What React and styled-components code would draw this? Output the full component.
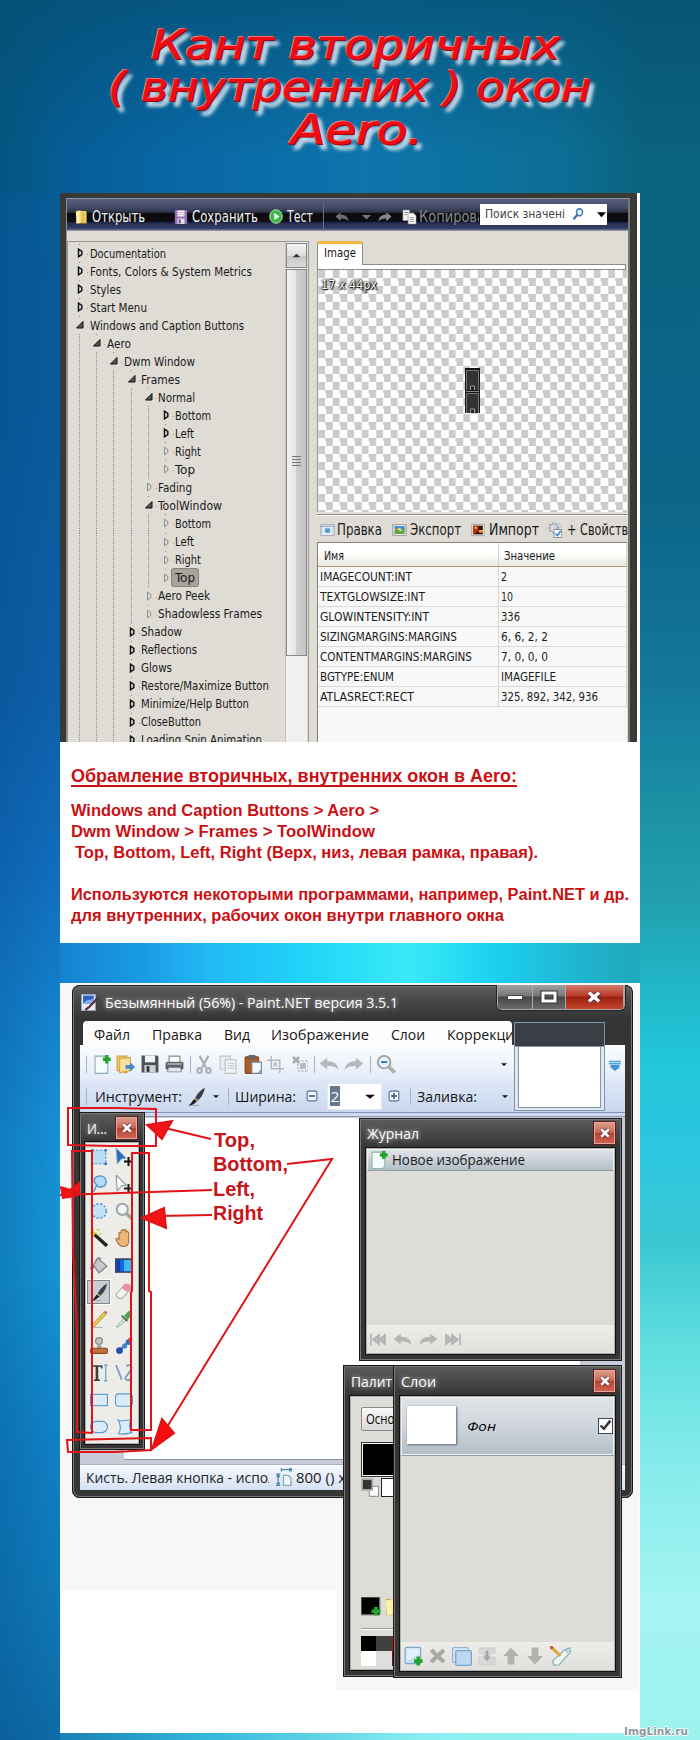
import React, { useLayoutEffect, useRef, useState } from "react";
import styled, { createGlobalStyle, css } from "styled-components";

const Global = createGlobalStyle`
  * { box-sizing: border-box; }
  body { margin: 0; }
  svg { display: block; flex: none; }
`;

const tahoma = `"DejaVu Sans Condensed", "DejaVu Sans", Tahoma, sans-serif`;
const segoe = `"Open Sans", "Noto Sans", "Segoe UI", sans-serif`;
const arial = `"Liberation Sans", Arial, sans-serif`;

/* ---------- text set to a known width ---------- */
const FitBox = styled.span`
  display: inline-block;
  flex: none;
  white-space: pre;
  text-align: left;
  width: ${(p) => p.$w}px;
  margin-left: ${(p) => p.$gap || 0}px;
`;
const FitInner = styled.span`
  display: inline-block;
  transform-origin: 0 50%;
`;
function Fit({ w, gap, children }) {
  const ref = useRef(null);
  const [k, setK] = useState(1);
  useLayoutEffect(() => {
    setK(w / ref.current.getBoundingClientRect().width);
  }, [w]);
  return (
    <FitBox $w={w} $gap={gap}>
      <FitInner ref={ref} style={{ transform: `scaleX(${k})` }}>{children}</FitInner>
    </FitBox>
  );
}

/* ---------- page ---------- */
const Page = styled.main`
  position: relative;
  width: 700px;
  height: 1740px;
  overflow: hidden;
  display: flex;
  flex-direction: column;
  background:
    linear-gradient(90deg, #1682d0 0, #1a9ae4 14%, #22baf5 26%, #20d4f8 42%, #38eaf8 60%, #1cd0f0 75%, #1fb4d0 90%, #20a8bc 100%) 60px 930px / 580px 60px no-repeat,
    linear-gradient(180deg, #0b627c 0, #0c6488 12%, #0c6688 20%, #13789c 32%, #1a8fa4 39%, #22a0b0 46%, #20b2c2 50%, #22c6da 56%, #2cc6e0 62%, #3cc8d2 68%, #62dfe0 75%, #88ecec 83%, #a4f4f2 91%, #9df2ee 100%) 640px 193px / 60px 1547px no-repeat,
    linear-gradient(90deg, rgba(0, 70, 130, .28), transparent) 0 193px / 60px 1547px no-repeat,
    linear-gradient(180deg, #075c96 0, #0a5a9c 14%, #0e5fa8 32%, #116cbc 43%, #1480cc 52%, #1790d6 61%, #1494d2 70%, #1080c4 81%, #0f78b6 91%, #0e6aa6 100%) 0 193px / 60px 1547px no-repeat,
    linear-gradient(180deg, rgba(5, 80, 115, .75), rgba(5, 80, 115, 0) 80%) 0 0 / 100% 193px no-repeat,
    linear-gradient(90deg, #04567f 0, #065c96 9%, #0867a4 25%, #0d74ac 52%, #0c6f96 80%, #0b627c 92%, #0b627c 100%) 0 0 / 100% 193px no-repeat,
    linear-gradient(90deg, #0e6aa6 0, #35b8dc 30%, #8aeef0 60%, #9df2ee 100%);
`;
const Heading = styled.h1`
  margin: 0;
  height: 193px;
  padding: 23.5px 0 0 108px;
  display: flex;
  flex-direction: column;
  font: italic 400 40px/42.5px "DejaVu Sans", sans-serif;
  color: #ee0c14;
  -webkit-text-stroke: 0.5px #ee0c14;
  text-shadow: -1px -1px 0 #ff8f8c, 1px 1px 0 #82000a, 4px 5px 4px #c5dce8, 4px 5px 3px #a9cbdc;
`;
const Card = styled.section`
  width: 580px;
  height: ${(p) => p.$h}px;
  margin: 0 0 ${(p) => p.$mb || 0}px 60px;
  flex: none;
  background: #fff;
  position: relative;
`;

/* ---------- style editor ---------- */
const Editor = styled.div`
  width: 577px;
  height: 549px;
  overflow: hidden;
  display: flex;
  flex-direction: column;
  border: solid #393936;
  border-width: 5px 7px 0 6px;
  background: #dfdcd6;
  box-shadow: inset 1px 1px 0 #8b8f9c, inset -2px 0 0 #77756f;
  font-family: ${tahoma};
  color: #1a1a1a;
`;
const EditorBar = styled.div`
  flex: none;
  height: 32px;
  margin: 1px 2px 0 1px;
  display: flex;
  align-items: center;
  padding: 3px 0 0 8px;
  background: linear-gradient(#575f80 0, #454c68 25%, #2c3145 42%, #0c0c10 43%, #0d0d14 70%, #232a4c 74%, #38426e 94%, #8f93a0 97%);
  color: #f4f4f6;
  font-size: 15px;
  line-height: 20px;
`;
const Slot = styled.span`
  flex: none;
  display: inline-flex;
  align-items: center;
  margin-left: ${(p) => p.$gap || 0}px;
  color: ${(p) => p.$c || "inherit"};
`;
const BarRule = styled.i`
  flex: none;
  width: 1px;
  height: ${(p) => p.$h || 28}px;
  margin-left: ${(p) => p.$gap}px;
  background: ${(p) => p.$c || "#6a6f80"};
`;
const Search = styled.div`
  flex: none;
  display: flex;
  align-items: center;
  width: 127px;
  height: 21px;
  margin: -5px 0 0 1px;
  padding-left: 5px;
  background: #fff;
  color: #444;
  font-size: 13px;
`;
const Clip = styled.div`
  overflow: hidden;
  flex: none;
  width: ${(p) => p.$w}px;
`;
const EditorBody = styled.div`
  flex: 1;
  display: flex;
  padding: 10px 1px 0 1px;
`;
const Tree = styled.div`
  width: 242px;
  flex: none;
  display: flex;
  border: 1px solid #9a9890;
  border-bottom: 0;
`;
const TreeRows = styled.ul`
  flex: 1;
  margin: 0;
  padding: 2px 0 0 11px;
  list-style: none;
  overflow: hidden;
  height: 501px;
`;
const TreeRow = styled.li`
  display: flex;
  align-items: center;
  height: 18.04px;
  font-size: 12.5px;
  line-height: 17px;
`;
const Guide = styled.i`
  flex: none;
  width: 17.2px;
  align-self: stretch;
  background: repeating-linear-gradient(#8a8882 0 1px, transparent 1px 2px) 0 0 / 1px 100% no-repeat;
`;
const Toggle = styled.span`
  flex: none;
  width: 10.5px;
  align-self: stretch;
  display: flex;
  align-items: center;
  background: linear-gradient(#888 0 0) 0 0 / 1px 1px no-repeat, linear-gradient(#999 0 0) 8px 10px / 1px 1px no-repeat;
  svg { margin-left: -3px; }
`;
const TreeLabel = styled.span`
  display: inline-flex;
  ${(p) => p.$on && css`
    margin-left: -3px;
    padding: 0 3px;
    background: #aaa49d;
    border-radius: 2px;
    box-shadow: 0 0 0 1px #89837c;
  `}
`;
const Scroll = styled.div`
  width: 22px;
  flex: none;
  margin-right: 1px;
  background: #f1f0ee;
  border-left: 1px solid #c4c2bd;
`;
const ScrollUp = styled.div`
  margin-top: 1px;
  height: 25px;
  border: 1px solid #85888c;
  background: linear-gradient(#f4f4f4, #dcdcdc 50%, #c6c6c6 52%, #dadada);
  display: flex;
  align-items: center;
  justify-content: center;
`;
const ScrollThumb = styled.div`
  margin-top: 1px;
  height: 387px;
  padding-bottom: 3px;
  border: 1px solid #85888c;
  background: linear-gradient(90deg, #f4f4f4, #e4e4e6 45%, #cfcfd2 50%, #c3c3c8);
  display: flex;
  align-items: center;
  justify-content: center;
`;
const Side = styled.div`
  flex: none;
  width: 311px;
  margin-left: 8px;
  display: flex;
  flex-direction: column;
`;
const Tab = styled.div`
  width: 46px;
  height: 23px;
  flex: none;
  padding-left: 6px;
  border: 1px solid #8d8b86;
  border-top: 3px solid #f2b545;
  border-bottom: 0;
  border-radius: 3px 3px 0 0;
  background: #fff;
  font-size: 12.5px;
  line-height: 18px;
`;
const TabStrip = styled.div`
  height: 6px;
  width: 309px;
  flex: none;
  background: #fff;
  border: 1px solid #8d8b86;
  position: relative;
  &::before { content: ""; position: absolute; left: 0; top: -1px; width: 44px; height: 1px; background: #fff; }
`;
const Checker = styled.div`
  flex: none;
  height: 242px;
  width: 310px;
  display: grid;
  grid-template-rows: 98px 1fr;
  justify-items: center;
  border-left: 1px solid #999;
  background: repeating-conic-gradient(#fff 0 25%, #cbcbcb 0 50%) 0.3px 0 / 14.5px 16px;
`;
const Dimension = styled.span`
  justify-self: start;
  padding: 6px 0 0 3px;
  font-size: 12.5px;
  line-height: 17px;
  color: #fff;
  text-shadow: 0 0 1px #000, 1px 1px 1px #000, -1px 0 2px #333, 1px 0 2px #555;
`;
const Actions = styled.div`
  flex: none;
  height: 28px;
  display: flex;
  align-items: center;
  margin-top: 2px;
  padding: 3px 0 0 3px;
  overflow: hidden;
  border-top: 1px solid #8f8d88;
  box-shadow: inset 0 1px 0 #fff;
  font-size: 15px;
  line-height: 20px;
`;
const Table = styled.div`
  flex: 1;
  width: 310px;
  background: #f8f8f8;
  border: 1px solid #85827c;
  border-width: 1px 0 0 1px;
  font-size: 12.3px;
`;
const Row = styled.div`
  display: grid;
  grid-template-columns: 181px 1fr;
  height: ${(p) => (p.$head ? 24 : 20)}px;
  line-height: ${(p) => (p.$head ? 26 : 21)}px;
  border-bottom: 1px solid ${(p) => (p.$head ? "#b59a80" : "#dadad6")};
  background: ${(p) => (p.$head ? "linear-gradient(#fff 45%, #ece8dc)" : "none")};
  overflow: hidden;
`;
const Cell = styled.div`
  padding-left: ${(p) => p.$pl}px;
  border-right: 1px solid #d6d4cd;
`;

/* ---------- caption under the editor ---------- */
const Note = styled.div`
  padding: 21px 0 0 11px;
  display: flex;
  flex-direction: column;
  align-items: flex-start;
  font: 700 17.2px/21.1px ${arial};
  color: #cb1014;
`;
const NoteTitle = styled.h2`
  margin: 0 0 12.6px;
  height: 24px;
  border-bottom: 2px solid #cb1014;
  font: 700 18.6px/26px ${arial};
`;
const NoteLine = styled.p`
  margin: 0 0 ${(p) => p.$mb || 0}px ${(p) => p.$ml || 0}px;
  height: 21.1px;
`;

/* ---------- floating windows ---------- */
const Win = styled.div`
  position: absolute;
  left: ${(p) => p.$x}px;
  top: ${(p) => p.$y}px;
  width: ${(p) => p.$w}px;
  height: ${(p) => p.$h}px;
  display: flex;
  flex-direction: column;
  overflow: hidden;
  font-family: ${segoe};
  padding: 0 ${(p) => p.$pad || 8}px ${(p) => p.$pad || 8}px;
  border-radius: ${(p) => p.$r || 0}px;
  background: linear-gradient(#5e5e5e, #474747 16px, #353535 ${(p) => p.$cap || 30}px, #363636);
  box-shadow: inset 0 0 0 1px #191919, inset 0 0 0 2px #777;
`;
const WinTitle = styled.div`
  flex: none;
  height: ${(p) => p.$h}px;
  display: flex;
  align-items: center;
  padding: 0 0 ${(p) => p.$pb || 0}px ${(p) => p.$pl || 0}px;
  color: #fff;
  font-size: ${(p) => p.$fs || 15}px;
  line-height: 20px;
  text-shadow: 0 0 5px #aaa, 0 0 9px #888;
`;
const WinBody = styled.div`
  flex: 1;
  display: flex;
  flex-direction: column;
  position: relative;
  overflow: hidden;
  background: #dedcd6;
  outline: 1px solid #b0b0b0;
  box-shadow: 0 0 0 2px #111;
`;
const CloseX = styled.span`
  flex: none;
  width: 21px;
  height: 22px;
  margin-left: ${(p) => p.$gap}px;
  display: flex;
  align-items: center;
  justify-content: center;
  border: 1px solid #e6a79d;
  box-shadow: 0 0 0 1px #5a211c;
  background: linear-gradient(#dd9a8c, #c96655 48%, #b5412f 50%, #cf6350);
`;
const CaptionButtons = styled.div`
  align-self: flex-start;
  display: flex;
  width: 130px;
  height: 25px;
  margin-left: 99px;
  border: 1px solid #a8a8a8;
  border-top: 0;
  border-radius: 0 0 5px 5px;
  box-shadow: 0 0 0 1px #222;
  overflow: hidden;
`;
const CaptionButton = styled.span`
  width: ${(p) => p.$w}px;
  display: flex;
  align-items: center;
  justify-content: center;
  border-right: 1px solid #a8a8a8;
  background: ${(p) => p.$red ? "linear-gradient(#d2796b, #b93c2a 45%, #98200f 50%, #c8452c)" : "linear-gradient(#a0a0a0, #787878 45%, #474747 50%, #6a6a6a)"};
`;
const MenuBar = styled.div`
  flex: none;
  display: flex;
  align-items: center;
  height: 24px;
  width: 429px;
  margin-left: 3px;
  padding: 1px 0 0 11px;
  background: #fdfdfe;
  border-radius: 4px 4px 0 0;
  overflow: hidden;
  font-size: 15px;
  line-height: 20px;
  color: #151515;
`;
const Tools = styled.div`
  flex: none;
  height: ${(p) => p.$h}px;
  display: flex;
  align-items: center;
  padding: ${(p) => p.$pt || 0}px 0 0 6px;
  background: ${(p) => p.$bg};
  font-size: 15px;
  line-height: 20px;
  color: #151515;
`;
const WidthInput = styled.div`
  flex: none;
  width: 55px;
  height: 27px;
  margin-left: 9px;
  display: flex;
  align-items: center;
  padding-left: 2px;
  background: #fff;
  border: 1px solid #e4eaf4;
  color: #fff;
`;
const Selected = styled.span`
  width: 10px;
  line-height: 20px;
  text-align: center;
  background: #667a8c;
`;
const Workspace = styled.div`
  flex: 1;
  padding: 6px 0 4px 0;
  background: linear-gradient(#8094b8 0 1px, #cfdaee 1px 4px, #8898b0 4px 5px, #c8ccd9 5px);
`;
const Canvas = styled.div`
  height: 100%;
  width: 500px;
  background:
    linear-gradient(#8b8f98 0 0) 44px 100% / 456px 1px no-repeat,
    linear-gradient(#fff 0 0) 44px 0 / 456px 100% no-repeat,
    linear-gradient(#fff 0 0) 0 0 / 100% calc(100% - 11px) no-repeat;
`;
const Status = styled.div`
  flex: none;
  height: 26px;
  display: flex;
  align-items: center;
  padding: 0 0 1px 6px;
  background: linear-gradient(#f6f9fe, #d5e1f4);
  border-top: 1px solid #a9b3c4;
  font-size: 15px;
  line-height: 20px;
  color: #222;
`;
const Preview = styled.div`
  position: absolute;
  left: 442px;
  top: 37px;
  width: 91px;
  height: 89px;
  padding: 0 3px 2px;
  border: 1px solid #8295a4;
  background: #dfe8f2;
  display: flex;
  flex-direction: column;
  &::before { content: ""; height: 23px; margin: 0 -3px; background: #3b3f45; border-bottom: 1px solid #8295a4; }
  &::after { content: ""; flex: 1; background: #fff; border: 1px solid #8295a4; border-top: 0; }
`;
const Overflow = styled.div`
  position: absolute;
  left: 537px;
  top: 75px;
`;
const Ground = styled.div`
  height: ${(p) => p.$h}px;
  width: ${(p) => p.$w}px;
  margin-left: ${(p) => p.$ml || 0}px;
  background: #f8f8f8;
`;

const ToolGrid = styled.div`
  flex: 1;
  display: grid;
  grid-template-columns: 25px 25px;
  grid-auto-rows: 27px;
  place-items: center;
  background: #eeece8;
`;
const ToolCell = styled.span`
  width: 23px;
  height: 24px;
  display: flex;
  align-items: center;
  justify-content: center;
  ${(p) => p.$on && css`border: 1px solid #7d8890; background: #c9ced3; box-shadow: 0 0 0 1px #fff;`}
`;
const HistoryItem = styled.div`
  flex: none;
  height: 22px;
  display: flex;
  align-items: center;
  padding-left: 3px;
  border: 1px solid #eef2f4;
  border-bottom-color: #8aa0a8;
  background: linear-gradient(#dfe4e9, #b4bec7);
  font-size: 14.5px;
  line-height: 20px;
  color: #1c1c1c;
`;
const Spacer = styled.div`flex: 1;`;
const FootBar = styled.div`
  flex: none;
  height: 28px;
  display: flex;
  align-items: center;
  padding-left: ${(p) => p.$pl}px;
  gap: ${(p) => p.$g}px;
  background: linear-gradient(#eeedea, #e2e0dc);
`;
const LayerItem = styled.div`
  flex: none;
  height: 58px;
  display: flex;
  align-items: center;
  padding-left: 5px;
  border: 1px solid #eef2f4;
  box-shadow: 0 1px 0 #8e9ba4;
  background: linear-gradient(#dfe4e8, #d0d6dc 50%, #b3bfc8);
  font-size: 13.5px;
  font-style: italic;
`;
const Thumb = styled.i`
  width: 51px;
  height: 38px;
  margin-top: -3px;
  background: #fff;
  box-shadow: 1px 1px 2px #667, 0 0 1px #889;
`;
const Check = styled.i`
  width: 16px;
  height: 16px;
  margin-left: 102px;
  border: 1px solid #444;
  background: #fff;
`;
const PaletteBody = styled.div`
  padding: 10px 0 0 10px;
  display: flex;
  flex-direction: column;
`;
const Combo = styled.div`
  height: 24px;
  width: 70px;
  padding-left: 4px;
  border: 1px solid #8a8a88;
  border-radius: 2px;
  background: linear-gradient(#fafafa, #d8d8d8);
  font-size: 14px;
  line-height: 22px;
`;
const Primary = styled.div`
  margin-top: 11px;
  width: 60px;
  height: 35px;
  background: #000;
  border: 1px solid #333;
  box-shadow: inset 0 0 0 1px #fff;
`;
const SwatchRow = styled.div`
  display: flex;
  margin-top: ${(p) => p.$mt || 0}px;
`;
const Swatch = styled.i`
  width: ${(p) => p.$w || 15.3}px;
  height: ${(p) => p.$h || 15}px;
  background: ${(p) => p.$c};
  ${(p) => p.$line && css`border: 1px solid #222;`}
  margin-left: ${(p) => p.$gap || 0}px;
`;
const Divider = styled.div`
  margin-top: 11px;
  height: 2px;
  background: linear-gradient(#9a9894 50%, #fff 50%);
`;

/* ---------- hand annotations ---------- */
const Marks = styled.svg`
  position: absolute;
  left: 0;
  top: 983px;
`;
const Labels = styled.div`
  position: absolute;
  left: 213px;
  top: 1128px;
  display: flex;
  flex-direction: column;
  font: 700 20px/24.4px ${arial};
  color: #c8141a;
`;
const Watermark = styled.div`
  position: absolute;
  left: 624px;
  top: 1725px;
  font: 700 11px/14px "DejaVu Sans", sans-serif;
  color: #8d9a9c;
  text-shadow: 1px 0 #fff, -1px 0 #fff, 0 1px #fff, 0 -1px #fff;
`;

/* ---------- icons ---------- */
const plus = (x, y) => <path d={`M${x} ${y - 3.6}v7.2M${x - 3.6} ${y}h7.2`} stroke="#23a52c" strokeWidth="3" />;
const undoPath = "M0.5 7.5L6.5 2.5v3C12 5.3 15 8 15.5 13.2 13 10.2 10.5 9.6 6.5 9.8v3z";
const shapes = {
  folder: <><path d="M1.500 1.500h5l2 1.500h6v11.500h-13z" fill="#c9a13c" /><path d="M1 3l5-1.500v12.500L2 14.500z" fill="#fff0a8" /><path d="M6 2h7.500v11.500H6z" fill="#f1d778" /><path d="M8 3.500l4-1v10l-4 1z" fill="#e3bd55" /></>,
  disk: <><rect x="1" y="1" width="14" height="14" rx="1" fill="#9a6db5" /><rect x="4" y="1.500" width="8" height="6" fill="#f2f2f6" /><path d="M4 3.500h8M4 5.500h8" stroke="#b9b4c6" /><rect x="4" y="9.500" width="8" height="5.500" fill="#e2dce8" /><rect x="5.500" y="10.500" width="2" height="4" fill="#5f4577" /></>,
  play: <><circle cx="8" cy="8" r="7.200" fill="#3fb54a" stroke="#bff0bc" /><path d="M6 4.200v7.600L12 8z" fill="#fff" /></>,
  undo: <path d={undoPath} fill="currentColor" />,
  redo: <path d={undoPath} transform="matrix(-1 0 0 1 16 0)" fill="currentColor" />,
  pages: <><path d="M1 1h7v10.500H1z" fill="#f3f3f3" stroke="#999" strokeWidth=".6" /><path d="M6.500 4H12l3 2.500V15H6.500z" fill="#fff" stroke="#888" strokeWidth=".6" /><path d="M2.500 3.500h4M2.500 5.500h3M8 8.500h5M8 10.500h5M8 12.500h5" stroke="#777" strokeWidth=".8" /></>,
  find: <><circle cx="10" cy="6" r="4" fill="#eef6ff" stroke="#3778bd" strokeWidth="2" /><path d="M7 9L2 14" stroke="#2d66a9" strokeWidth="2.500" /></>,
  edit: <><rect x="1" y="2" width="14" height="12" fill="#f3f6fa" stroke="#8b9bab" /><path d="M1 4h14" stroke="#9bb0c4" strokeWidth="1.500" /><rect x="5.500" y="6.500" width="5" height="4.500" fill="#4492c8" stroke="#7ab4d8" /><path d="M3 6v6M13 6v6" stroke="#bcc" /></>,
  exportImg: <><rect x="1" y="2" width="14" height="12" fill="#fff" stroke="#888" /><path d="M2.500 3.500h11v6l-4-2-3 3-4-4z" fill="#4b8fd0" /><path d="M2.500 12.500v-4l4-3 3 4 4-4v7z" fill="#69a344" /><circle cx="8" cy="7" r="1.600" fill="#f0dc50" /></>,
  importImg: <><rect x="1" y="1.500" width="14" height="13" fill="#fff" stroke="#999" /><rect x="2.500" y="3" width="11" height="10" fill="#2e1208" /><path d="M2.500 3h6v6l-6 4z" fill="#c4320d" /><path d="M9 8h4.500v3H9z" fill="#f0a030" /><path d="M4 4h3v3H4z" fill="#e98d2e" /></>,
  gears: <><circle cx="6" cy="6" r="4.500" fill="none" stroke="#8fa3b5" strokeWidth="2.200" strokeDasharray="2 1.200" /><circle cx="10" cy="4.500" r="3" fill="none" stroke="#b4c4d2" strokeWidth="1.500" strokeDasharray="1.500 1" /><rect x="6.500" y="7.500" width="8" height="8" fill="#fff" stroke="#7d93a8" /><path d="M8 11.500l2 2 3.500-4.500" stroke="#2f7dc2" strokeWidth="1.500" fill="none" /></>,
  app: <><rect x=".5" y=".5" width="13" height="15" fill="#e8ecf4" stroke="#9aa6b8" /><rect x="2" y="1.500" width="10" height="7.500" fill="#2c5fc0" /><path d="M2 9c3-4 6-3 10-5v5z" fill="#7fb2ee" /><path d="M15.500 4L8 12l-4 3" stroke="#5c2434" strokeWidth="2" fill="none" /></>,
  newDoc: <><path d="M1 1h12v14.500H1z" fill="#f6fbfb" stroke="#8fb3ad" /><path d="M10 15.500l3-3v3z" fill="#9cc" />{plus(12, 3.600)}</>,
  open: <><path d="M1 1h8v14l-8-2z" fill="#f3cd70" stroke="#cf9f37" /><path d="M3 3l9-1v11l-9 2z" fill="#f9e2a0" stroke="#d3a848" /><path d="M8 8.500h4V6l4 4-4 4v-2.500H8z" fill="#3f8cc9" /></>,
  save: <><path d="M.5.500h14l1 1V15.500H.5z" fill="#4c5258" /><rect x="3.500" y=".5" width="9" height="6" fill="#f4f6f6" /><rect x="3" y="9" width="10" height="6.500" fill="#c9cfd2" /><rect x="5" y="10" width="2.500" height="5" fill="#333" /></>,
  print: <><path d="M3.500 1h9v6h-9z" fill="#fff" stroke="#888" /><rect x=".5" y="6" width="15" height="7" rx="1.500" fill="#5a6066" /><rect x="2" y="7" width="12" height="2" fill="#9ba3a9" /><path d="M3 11h10l1 4H2z" fill="#dfe9f4" stroke="#777" strokeWidth=".6" /></>,
  cut: <g stroke="#aeb2b6" fill="none" strokeWidth="2"><path d="M4 .5l6 10.500M12 .5L6 11" /><circle cx="4" cy="13" r="2" /><circle cx="12" cy="13" r="2" /></g>,
  copy: <><path d="M1 1h9v11H1z" fill="#eceeef" stroke="#c2c6ca" /><path d="M5.500 4h9.500v11.500H5.500z" fill="#f2f3f4" stroke="#bcc0c4" /><path d="M7.500 7h6M7.500 9h6M7.500 11h6" stroke="#cdd1d4" /></>,
  paste: <><rect x="1" y="1.500" width="12" height="14" rx="1" fill="#a85c28" stroke="#84431a" /><rect x="4" y="0" width="6" height="3.500" fill="#667" /><path d="M7 6h8.500v9.500H7z" fill="#f4f8fd" stroke="#6e8aa8" /><path d="M12.500 15.500l3-3" stroke="#6e8aa8" /></>,
  crop: <g stroke="#b3b7bb" fill="none" strokeWidth="1.300"><path d="M4 0v12h12M0 4h12v12" /><path d="M6 6h4v4H6z" fill="#c6cace" stroke="none" /></g>,
  desel: <g fill="#b8bcc0"><path d="M6 5h10v10H6z" fill="none" stroke="#b8bcc0" strokeDasharray="2 1.500" strokeWidth="1.500" /><path d="M1 1l6 6M7 1L1 7" stroke="#a6aaae" strokeWidth="2.500" /><path d="M8 7h6v6H8z" /></g>,
  zoomOut: <><circle cx="6.500" cy="6.500" r="5" fill="#eaf3fa" stroke="#9ba3aa" strokeWidth="1.500" /><path d="M4 6.500h5" stroke="#2d78b8" strokeWidth="1.500" /><path d="M10.500 10.500L15 15" stroke="#b5b0ac" strokeWidth="3" /></>,
  magnifier: <><circle cx="6.500" cy="6.500" r="5" fill="#f1f4f6" stroke="#9ba3aa" strokeWidth="1.700" /><path d="M10.500 10.500L15 15" stroke="#a5a09c" strokeWidth="3" /></>,
  brush: <><path d="M1 15.500h9" stroke="#b0aaa2" /><path d="M15 .5C11 3 7.500 7 7 9.500l2.500 1.500C12 9 14.500 5 15 .5z" fill="#3a4148" /><path d="M7 9.500l2.500 1.500L6 14c-2 1.500-4 1.500-4.500 1.500C4 14 4.500 11 7 9.500z" fill="#1d1d1d" /><path d="M7 9.500l2.500 1.500-1 1L6 10.500z" fill="#caa36b" /></>,
  selRect: <><rect x="2" y="2" width="12" height="12" fill="#bcdcf4" stroke="#3f8dd0" strokeDasharray="2 1.500" /><path d="M1 1h2v2H1zM13 1h2v2h-2zM1 13h2v2H1zM13 13h2v2h-2z" fill="#2c6cb0" /></>,
  moveSel: <><path d="M1 0l9 9-4 .5L2 14z" fill="#2d6fb4" stroke="#7aa7d4" strokeWidth=".7" /><path d="M12 8v8M8 12h8" stroke="#111" strokeWidth="1.800" /></>,
  lasso: <><path d="M6 9c-5-4-1-8.500 4-8s6 8 1 9.500c-3 1-4 0-5-1.500l-3 6" fill="#b5daf5" stroke="#5a96cc" strokeWidth="1.300" /></>,
  movePix: <><path d="M1 0l9 9-4 .5L2 14z" fill="#fff" stroke="#8896a4" /><path d="M12 8v8M8 12h8" stroke="#222" strokeWidth="1.800" /></>,
  ellSel: <circle cx="8" cy="8" r="6.500" fill="#c3e2f6" stroke="#4e96d4" strokeWidth="1.300" strokeDasharray="2 1.500" />,
  wand: <><path d="M4 5l11 10" stroke="#222" strokeWidth="3" /><path d="M3 0v7M0 3.500h6M6 1l3-1M8 5l2-1" stroke="#c8cc3c" strokeWidth="1.200" /></>,
  hand: <path d="M3.500 8V4c0-1.500 2-1.500 2 0V2c0-1.700 2.200-1.700 2.200 0v-.5c0-1.700 2.200-1.700 2.200 0V3c.5-1.300 2.200-1 2.200.5V11c0 3-2 4.500-5 4.500S2.500 13 1 9.500c-.5-1.500 1.500-2 2.500 0z" fill="#eab67c" stroke="#a8743c" />,
  bucket: <><path d="M1 8c-1 3-.5 5 1 6l2-6z" fill="#3c50a8" /><path d="M7 2l8 7-7 6-5-7z" fill="#c7cacd" stroke="#777c82" /><path d="M5 6c0-4 3-6 5-3" fill="none" stroke="#888" /></>,
  gradient: <><rect x="0" y="2" width="16" height="13" fill="#3a4a60" /><rect x="1.500" y="3.500" width="13" height="10" fill="#1a66e0" /><path d="M8 3.500h6.500v10H8z" fill="#3cbaf2" /><path d="M1.500 3.500h3v10h-3z" fill="#0c3fb4" /></>,
  eraser: <><path d="M1 10l7-8c1-1.500 6-1 7 2l-8 9c-2 2-6 0-6-3z" fill="#f4f4f4" stroke="#a9a9ae" /><path d="M6 4l2.500-2.500C10 0 15 1 15 4l-3 3.500C9 7.500 7 6 6 4z" fill="#ee90a0" /></>,
  pencil: <><path d="M2 13L12.500 2l2 1.500L4 14.500l-3 .8z" fill="#f0cc50" stroke="#a1832c" strokeWidth=".8" /><path d="M12.500 2l1-1.500 2 1.500-1 1.500z" fill="#d66" /><path d="M1 15.500h10" stroke="#b7b2aa" /></>,
  picker: <><path d="M1 15L8 7l2 2-7 6z" fill="#d6efdc" stroke="#8aa894" strokeWidth=".8" /><path d="M8 5l4-4c2-1 4 1 3 3l-4 5z" fill="#54a258" /><path d="M6 5l5 5" stroke="#4b6a50" strokeWidth="1.500" /></>,
  stamp: <><circle cx="8" cy="3.500" r="3" fill="#c4c4c4" stroke="#888" /><path d="M7 6h2.500l1 4H6z" fill="#a5a5a5" /><rect x=".5" y="10" width="15" height="4.500" rx="1.500" fill="#bf7440" stroke="#87481f" /></>,
  recolor: <><path d="M4 12l8-8" stroke="#3b85d0" strokeWidth="2" /><circle cx="4" cy="12" r="3" fill="#2351a8" /><circle cx="8.500" cy="8" r="2.300" fill="#3b85d0" /><circle cx="12" cy="4.500" r="2.500" fill="#3a6cbe" /><circle cx="13.500" cy="2.500" r="2" fill="#d04848" /></>,
  text: <><path d="M1 1h10v3H9.800L9.300 2.500H7.300v11l1.500.5v1H3.500v-1l1.500-.5v-11H2.700L2.200 4H1z" fill="#3c3c3c" /><path d="M14 1v14" stroke="#5c9cd0" /><path d="M12.500 1h3M12.500 15h3" stroke="#5c9cd0" /></>,
  line: <g fill="none" stroke="#7898b8" strokeWidth="1.500"><path d="M1 1l5 13" /><path d="M10 2c5-3 6 1 3 5s-5 6-3 7 4 0 5-2" /></g>,
  rect: <rect x=".5" y="3" width="15" height="10" fill="#d9ecf8" stroke="#5c9acc" />,
  rrect: <rect x=".5" y="2.500" width="15" height="11" rx="3" fill="#d9ecf8" stroke="#5c9acc" />,
  ell: <rect x=".5" y="3" width="15" height="10" rx="5" fill="#d9ecf8" stroke="#5c9acc" />,
  free: <path d="M3 2c4 2 7-1 11 0-2 4-1 8 1 11-4 1-8 2-12 1 3-4 2-8 0-12z" fill="#d9ecf8" stroke="#5c9acc" />,
  first: <path d="M1 1v14M15 2v12L9 8zM9 2v12L3 8z" fill="#b9b9b9" stroke="#b0b0b0" strokeWidth="1.500" />,
  last: <path d="M15 1v14M1 2v12l6-6zM7 2v12l6-6z" fill="#b9b9b9" stroke="#b0b0b0" strokeWidth="1.500" />,
  addLayer: <><rect x="1" y="1" width="13" height="13" rx="1" fill="#c5def4" stroke="#7fa6cc" /><path d="M2 2h11v5L2 12z" fill="#e0effb" />{plus(12, 12)}</>,
  cross: <path d="M2 2l12 12M14 2L2 14" stroke="#a9a9a7" strokeWidth="4" />,
  dupLayer: <><rect x=".5" y=".5" width="12.500" height="12.500" rx="1" fill="#dcebf8" stroke="#8fb2d4" /><rect x="3" y="3" width="12.500" height="12.500" rx="1" fill="#bcd8f2" stroke="#789fc8" /></>,
  merge: <><rect x="1" y="1" width="14" height="14" fill="#d8d8d6" stroke="#cfcfcd" /><path d="M8 3v6" stroke="#a4a4a2" strokeWidth="2.500" /><path d="M4.500 8h7L8 12z" fill="#a4a4a2" /><path d="M0 7h4M12 7h4" stroke="#eee" strokeWidth="1.500" /></>,
  up: <path d="M8 .5l7 7.500h-4v7.500H5V8H1z" fill="#b2b2b0" />,
  down: <path d="M8 15.500l7-7.500h-4V.5H5V8H1z" fill="#b2b2b0" />,
  props: <><path d="M2 12L11 3l4-1.500.5 3.500-8.500 10-4 .5z" fill="#eef5f4" stroke="#8fb3b4" /><circle cx="13" cy="4" r="1" fill="none" stroke="#8fb3b4" strokeWidth=".7" /><path d="M1 1l7 7" stroke="#d9a83c" strokeWidth="2.500" /><path d="M0 0l2 2" stroke="#c54" strokeWidth="2.500" /></>,
  minus: <><rect x="1.500" y="1.500" width="13" height="13" rx="2" fill="#f1f5fc" stroke="#5d7396" strokeWidth="1.500" /><path d="M4 8h8" stroke="#34507c" strokeWidth="2" /></>,
  plusBox: <><rect x="1.500" y="1.500" width="13" height="13" rx="2" fill="#f1f5fc" stroke="#5d7396" strokeWidth="1.500" /><path d="M4 8h8M8 4v8" stroke="#34507c" strokeWidth="2" /></>,
  chevron: <><path d="M0 2h16M0 5h16" stroke="#4ea0dc" strokeWidth="2" /><path d="M2 7h12v4l-6 5-6-5z" fill="#3f97d8" /></>,
  caret: <path d="M0 4h16L8 13z" fill="currentColor" />,
  caretUp: <path d="M1 12h14L8 4z" fill="#333" />,
  size: <g stroke="#4f8aa8" strokeWidth="1.200" fill="none"><path d="M1 5.500h4M1 15.500h4M3 6v9M1.500 8L3 6l1.500 2M1.500 13L3 15l1.500-2M6 0v3M15.500 0v3M6 1.500h9M13.500 0L15 1.500 13.500 3" /><path d="M8 6.500h4.500l2.500 2.500v6.500H8z" fill="#f6fafd" stroke="#8aa" /></g>,
  x: <><path d="M3 3l10 10M13 3L3 13" stroke="#54292a" strokeWidth="5.500" /><path d="M3 3l10 10M13 3L3 13" stroke="#fff" strokeWidth="3.600" /></>,
  blackAdd: <><rect x="0" y="0" width="15" height="15" fill="#000" stroke="#777" />{plus(12, 12)}</>,
  swap: <><path d="M8.500 7h7v8.500h-8V11" fill="#fff" stroke="#999" /><rect x="1" y="1" width="9" height="9" fill="#333" stroke="#aaa" strokeWidth="1.500" /></>,
  tick: <path d="M2 8l4 4 8-10" fill="none" stroke="#333" strokeWidth="3" />,
};
function Icon({ n, w = 16, h = w, c }) {
  return <svg width={w} height={h} viewBox="0 0 16 16" preserveAspectRatio="none" color={c}>{shapes[n]}</svg>;
}
function Arrow({ kind }) {
  if (kind === "open") return <svg width="8" height="8" viewBox="0 0 8 8"><path d="M7 .5V7H.5z" fill="#555" stroke="#111" /></svg>;
  const soft = kind === "soft";
  return <svg width="8" height="10" viewBox="0 0 8 10"><path d="M2.500 1.200v7.600L5.800 6.500V3.500z" fill={soft ? "none" : "#ddd"} stroke={soft ? "#8d8b86" : "#151515"} strokeWidth={soft ? 1 : 1.500} /></svg>;
}

const tree = [
  [0, "shut", "Documentation", 76], [0, "shut", "Fonts, Colors & System Metrics", 162], [0, "shut", "Styles", 31],
  [0, "shut", "Start Menu", 57], [0, "open", "Windows and Caption Buttons", 154], [1, "open", "Aero", 24],
  [2, "open", "Dwm Window", 71], [3, "open", "Frames", 39], [4, "open", "Normal", 37], [5, "shut", "Bottom", 36],
  [5, "shut", "Left", 19], [5, "soft", "Right", 26], [5, "soft", "Top", 20], [4, "soft", "Fading", 34],
  [4, "open", "ToolWindow", 64], [5, "soft", "Bottom", 36], [5, "soft", "Left", 19], [5, "soft", "Right", 26],
  [5, "soft", "Top", 20, true], [4, "soft", "Aero Peek", 52], [4, "soft", "Shadowless Frames", 104],
  [3, "shut", "Shadow", 41], [3, "shut", "Reflections", 56], [3, "shut", "Glows", 31],
  [3, "shut", "Restore/Maximize Button", 128], [3, "shut", "Minimize/Help Button", 108],
  [3, "shut", "CloseButton", 60], [3, "shut", "Loading Spin Animation", 121],
];
const rows = [
  ["IMAGECOUNT:INT", 92, "2", 6], ["TEXTGLOWSIZE:INT", 105, "10", 12], ["GLOWINTENSITY:INT", 109, "336", 19],
  ["SIZINGMARGINS:MARGINS", 137, "6, 6, 2, 2", 47], ["CONTENTMARGINS:MARGINS", 152, "7, 0, 0, 0", 47],
  ["BGTYPE:ENUM", 74, "IMAGEFILE", 55], ["ATLASRECT:RECT", 94, "325, 892, 342, 936", 97],
];
const toolIcons = ["selRect", "moveSel", "lasso", "movePix", "ellSel", "magnifier", "wand", "hand", "bucket", "gradient", "brush",
  "eraser", "pencil", "picker", "stamp", "recolor", "text", "line", "rect", "rrect", "ell", "free"];

function StyleEditor() {
  return (
    <Editor>
      <EditorBar>
        <Icon n="folder" w={13} h={16} />
        <Fit w={53} gap={4}>Открыть</Fit>
        <Slot $gap={13} $c="#050505"><Icon n="caret" w={9} h={7} /></Slot>
        <Slot $gap={7}><Icon n="disk" w={14} h={16} /></Slot>
        <Fit w={66} gap={4}>Сохранить</Fit>
        <Slot $gap={11}><Icon n="play" w={14} h={15} /></Slot>
        <Fit w={26} gap={4}>Тест</Fit>
        <BarRule $gap={10} />
        <Slot $gap={11} $c="#6b6d73"><Icon n="undo" w={14} h={14} /></Slot>
        <Slot $gap={13} $c="#75777d"><Icon n="caret" w={9} h={8} /></Slot>
        <Slot $gap={7} $c="#85878d"><Icon n="redo" w={14} h={14} /></Slot>
        <Slot $gap={10}><Icon n="pages" w={15} h={16} /></Slot>
        <Slot $c="#85878d" $gap={2}><Clip $w={60}><Fit w={66}>Копирова</Fit></Clip></Slot>
        <Search>
          <Fit w={80}>Поиск значені</Fit>
          <Slot $gap={7}><Icon n="find" w={12} h={14} /></Slot>
          <Slot $gap={13} $c="#000"><Icon n="caret" w={9} h={9} /></Slot>
        </Search>
      </EditorBar>
      <EditorBody>
        <Tree>
          <TreeRows>
            {tree.map(([lv, kind, name, w, on], i) => (
              <TreeRow key={i}>
                {Array.from({ length: lv }, (_, g) => <Guide key={g} />)}
                <Toggle><Arrow kind={kind} /></Toggle>
                <TreeLabel $on={on}><Fit w={w}>{name}</Fit></TreeLabel>
              </TreeRow>
            ))}
          </TreeRows>
          <Scroll>
            <ScrollUp><Icon n="caretUp" w={9} h={7} /></ScrollUp>
            <ScrollThumb>
              <svg width="9" height="12"><path d="M0 1.500h9M0 4.500h9M0 7.500h9M0 10.500h9" stroke="#777" /></svg>
            </ScrollThumb>
          </Scroll>
        </Tree>
        <Side>
          <Tab><Fit w={32}>Image</Fit></Tab>
          <TabStrip />
          <Checker>
            <Dimension><Fit w={56}>17 x 44px</Fit></Dimension>
            <svg width="15" height="45" viewBox="0 0 15 45">
              <rect width="15" height="45" fill="#151515" />
              <path d="M1.500 22V2.500h12V22M1.500 45V25.500h12V45" fill="#333" stroke="#777" />
              <path d="M1 23.500h13" stroke="#8a8a8a" />
              <path d="M5.500 22v-4h4v4M5.500 45v-4h4v4" fill="#222" stroke="#999" />
            </svg>
          </Checker>
          <Actions>
            <Icon n="edit" w={15} h={14} />
            <Fit w={45} gap={2}>Правка</Fit>
            <Slot $gap={10}><Icon n="exportImg" w={15} h={14} /></Slot>
            <Fit w={51} gap={3}>Экспорт</Fit>
            <Slot $gap={10}><Icon n="importImg" w={14} h={14} /></Slot>
            <Fit w={50} gap={4}>Импорт</Fit>
            <Slot $gap={9}><Icon n="gears" w={15} h={16} /></Slot>
            <Slot $gap={4}><Clip $w={61}><Fit w={68}>+ Свойства</Fit></Clip></Slot>
          </Actions>
          <Table>
            <Row $head>
              <Cell $pl={6}><Fit w={20}>Имя</Fit></Cell>
              <Cell $pl={5}><Fit w={51}>Значение</Fit></Cell>
            </Row>
            {rows.map(([a, aw, b, bw]) => (
              <Row key={a}>
                <Cell $pl={2}><Fit w={aw}>{a}</Fit></Cell>
                <Cell $pl={2}><Fit w={bw}>{b}</Fit></Cell>
              </Row>
            ))}
          </Table>
        </Side>
      </EditorBody>
    </Editor>
  );
}

function PaintWindow() {
  return (
    <Win $x={12} $y={2} $w={561} $h={513} $r={8} $cap={34}>
      <WinTitle $h={36} $pl={1} $pb={2}>
        <Slot $gap={0}><Icon n="app" w={17} h={17} /></Slot>
        <Fit w={293} gap={7}>Безымянный (56%) - Paint.NET версия 3.5.1</Fit>
        <CaptionButtons>
          <CaptionButton $w={36}><svg width="16" height="5"><rect x=".5" y=".5" width="15" height="4" fill="#fff" stroke="#444" /></svg></CaptionButton>
          <CaptionButton $w={34}><svg width="18" height="14"><rect x="3" y="3" width="12" height="8" fill="none" stroke="#333" strokeWidth="5" /><rect x="3" y="3" width="12" height="8" fill="none" stroke="#fff" strokeWidth="3" /></svg></CaptionButton>
          <CaptionButton $w={60} $red><Icon n="x" w={16} h={14} /></CaptionButton>
        </CaptionButtons>
      </WinTitle>
      <MenuBar>
        <Fit w={36}>Файл</Fit>
        <Fit w={50} gap={22}>Правка</Fit>
        <Fit w={26} gap={22}>Вид</Fit>
        <Fit w={98} gap={21}>Изображение</Fit>
        <Fit w={34} gap={22}>Слои</Fit>
        <Fit w={75} gap={22}>Коррекция</Fit>
      </MenuBar>
      <Tools $h={35} $pt={3} $bg="linear-gradient(#fbfcfe, #e4ebf8)">
        <BarRule $gap={0} $h={17} $c="#aab3c2" />
        <Slot $gap={7}><Icon n="newDoc" w={17} h={19} /></Slot>
        <Slot $gap={5}><Icon n="open" w={19} h={19} /></Slot>
        <Slot $gap={6}><Icon n="save" w={18} h={18} /></Slot>
        <Slot $gap={6}><Icon n="print" w={19} h={18} /></Slot>
        <BarRule $gap={6} $h={17} $c="#aab3c2" />
        <Slot $gap={4}><Icon n="cut" w={18} h={19} /></Slot>
        <Slot $gap={6}><Icon n="copy" w={18} h={19} /></Slot>
        <Slot $gap={7}><Icon n="paste" w={18} h={19} /></Slot>
        <Slot $gap={5}><Icon n="crop" w={17} h={17} /></Slot>
        <Slot $gap={8}><Icon n="desel" w={16} h={16} /></Slot>
        <BarRule $gap={6} $h={17} $c="#aab3c2" />
        <Slot $gap={4} $c="#b5b9be"><Icon n="undo" w={20} h={18} /></Slot>
        <Slot $gap={5} $c="#b5b9be"><Icon n="redo" w={20} h={18} /></Slot>
        <BarRule $gap={6} $h={17} $c="#aab3c2" />
        <Slot $gap={5}><Icon n="zoomOut" w={20} h={20} /></Slot>
        <Slot $gap={105} $c="#111"><Icon n="caret" w={6} h={5} /></Slot>
      </Tools>
      <Tools $h={32} $bg="linear-gradient(#dfe8f6, #c9d7ee)">
        <BarRule $gap={0} $h={17} $c="#aab3c2" />
        <Fit w={87} gap={8}>Инструмент:</Fit>
        <Slot $gap={5}><Icon n="brush" w={19} h={19} /></Slot>
        <Slot $gap={7} $c="#111"><Icon n="caret" w={6} h={5} /></Slot>
        <BarRule $gap={9} $h={17} $c="#aab3c2" />
        <Fit w={61} gap={6}>Ширина:</Fit>
        <Slot $gap={10}><Icon n="minus" w={12} h={12} /></Slot>
        <WidthInput><Selected>2</Selected><Slot $gap={25} $c="#111"><Icon n="caret" w={10} h={7} /></Slot></WidthInput>
        <Slot $gap={6}><Icon n="plusBox" w={12} h={12} /></Slot>
        <BarRule $gap={10} $h={17} $c="#aab3c2" />
        <Fit w={60} gap={6}>Заливка:</Fit>
        <Slot $gap={25} $c="#111"><Icon n="caret" w={6} h={5} /></Slot>
      </Tools>
      <Workspace><Canvas /></Workspace>
      <Status>
        <Clip $w={183}><Fit w={190}>Кисть. Левая кнопка - испол</Fit></Clip>
        <Slot $gap={6}><Icon n="size" w={17} h={18} /></Slot>
        <Fit w={50} gap={4}>800 () x</Fit>
      </Status>
      <Preview />
      <Overflow><Icon n="chevron" w={12} h={11} /></Overflow>
    </Win>
  );
}

function ToolsWindow() {
  return (
    <Win $x={19} $y={129} $w={66} $h={338} $pad={7}>
      <WinTitle $h={31} $pl={1}><Fit w={20}>И...</Fit><CloseX $gap={9}><Icon n="x" w={12} h={12} /></CloseX></WinTitle>
      <WinBody>
        <ToolGrid>
          {toolIcons.map((n) => (
            <ToolCell key={n} $on={n === "brush"}><Icon n={n} w={18} h={18} /></ToolCell>
          ))}
        </ToolGrid>
      </WinBody>
    </Win>
  );
}

function JournalWindow() {
  return (
    <Win $x={299} $y={135} $w={263} $h={243} $pad={8}>
      <WinTitle $h={31} $pb={1}><Fit w={52}>Журнал</Fit><CloseX $gap={175}><Icon n="x" w={12} h={12} /></CloseX></WinTitle>
      <WinBody>
        <HistoryItem><Icon n="newDoc" w={17} h={18} /><Fit w={133} gap={4}>Новое изображение</Fit></HistoryItem>
        <Spacer />
        <FootBar $pl={3} $g={7}>
          <Icon n="first" w={16} h={13} />
          <Icon n="undo" w={19} h={17} c="#b5b5b3" />
          <Icon n="redo" w={19} h={17} c="#b5b5b3" />
          <Icon n="last" w={16} h={13} />
        </FootBar>
      </WinBody>
    </Win>
  );
}

function PaletteWindow() {
  return (
    <Win $x={283} $y={382} $w={110} $h={312}>
      <WinTitle $h={32}><Clip $w={42}><Fit w={41}>Палит</Fit></Clip></WinTitle>
      <WinBody>
        <PaletteBody>
          <Combo><Fit w={56}>Основной</Fit></Combo>
          <Primary />
          <SwatchRow $mt={1}><Icon n="swap" w={18} h={19} /><Swatch $w={40} $h={19} $c="#fff" $line $gap={2} /></SwatchRow>
          <SwatchRow $mt={100}><Icon n="blackAdd" w={20} h={19} /><Slot $gap={3}><Icon n="folder" w={24} h={20} /></Slot></SwatchRow>
          <Divider />
          <SwatchRow $mt={6}><Swatch $c="#000" /><Swatch $c="#404040" /><Swatch $c="#c80c10" /></SwatchRow>
          <SwatchRow><Swatch $c="#fff" /><Swatch $c="#dedede" /><Swatch $c="#7c0c10" /></SwatchRow>
        </PaletteBody>
      </WinBody>
    </Win>
  );
}

function LayersWindow() {
  return (
    <Win $x={333} $y={382} $w={229} $h={313}>
      <WinTitle $h={32} $pb={1}><Fit w={35}>Слои</Fit><CloseX $gap={158}><Icon n="x" w={12} h={12} /></CloseX></WinTitle>
      <WinBody>
        <LayerItem>
          <Thumb />
          <Fit w={29} gap={11}>Фон</Fit>
          <Check><Icon n="tick" w={13} h={13} /></Check>
        </LayerItem>
        <Spacer />
        <FootBar $pl={3} $g={6}>
          <Icon n="addLayer" w={19} h={20} />
          <Icon n="cross" w={17} h={16} />
          <Icon n="dupLayer" w={20} h={19} />
          <Icon n="merge" w={18} h={19} />
          <Icon n="up" w={18} h={18} />
          <Icon n="down" w={18} h={18} />
          <Icon n="props" w={21} h={20} />
        </FootBar>
      </WinBody>
    </Win>
  );
}

export default function App() {
  return (
    <Page>
      <Global />
      <Heading>
        <Fit w={409} gap={43}>Кант вторичных</Fit>
        <Fit w={483}>( внутренних ) окон</Fit>
        <Fit w={132} gap={183}>Aero.</Fit>
      </Heading>
      <Card $h={750} $mb={40}>
        <StyleEditor />
        <Note>
          <NoteTitle><Fit w={446}>Обрамление вторичных, внутренних окон в Aero:</Fit></NoteTitle>
          <NoteLine><Fit w={308}>{"Windows and Caption Buttons > Aero >"}</Fit></NoteLine>
          <NoteLine><Fit w={304}>{"Dwm Window > Frames > ToolWindow"}</Fit></NoteLine>
          <NoteLine $ml={4} $mb={21.1}><Fit w={463}>Top, Bottom, Left, Right (Верх, низ, левая рамка, правая).</Fit></NoteLine>
          <NoteLine><Fit w={558}>Используются некоторыми программами, например, Paint.NET и др.</Fit></NoteLine>
          <NoteLine><Fit w={433}>для внутренних, рабочих окон внутри главного окна</Fit></NoteLine>
        </Note>
      </Card>
      <Card $h={750}>
        <Ground $h={608} $w={579} />
        <Ground $h={100} $w={303} $ml={276} />
        <PaintWindow />
        <JournalWindow />
        <ToolsWindow />
        <PaletteWindow />
        <LayersWindow />
      </Card>
      <Marks width="700" height="520" viewBox="0 983 700 520" fill="none" stroke="#e01418" strokeWidth="2">
        <path d="M68 1108h48l40 1v37H112l-44-1v-16zM72 1151h20v282l-15-1V1330l-4-80zM132 1153h17v138l2 1v138h-20v-138l1-1zM67 1440l84-2v12l-36 2H68z" />
        <path d="M211 1139l-46-11M60 1195l152-5M212 1215l-54 1M287 1164l45-5-165 268" />
        <path d="M147 1125l25-4-10 18zM142 1218l22-10 2 20zM60 1187l10 3 9-7v10l-15-5 12 8-14 2" fill="#f21616" />
        <path d="M152 1449l10-30 12 14z" fill="#f50c0c" />
      </Marks>
      <Labels>
        <Fit w={41} gap={1}>Top,</Fit>
        <Fit w={75}>Bottom,</Fit>
        <Fit w={42}>Left,</Fit>
        <Fit w={50}>Right</Fit>
      </Labels>
      <Watermark><Fit w={64}>ImgLink.ru</Fit></Watermark>
    </Page>
  );
}
